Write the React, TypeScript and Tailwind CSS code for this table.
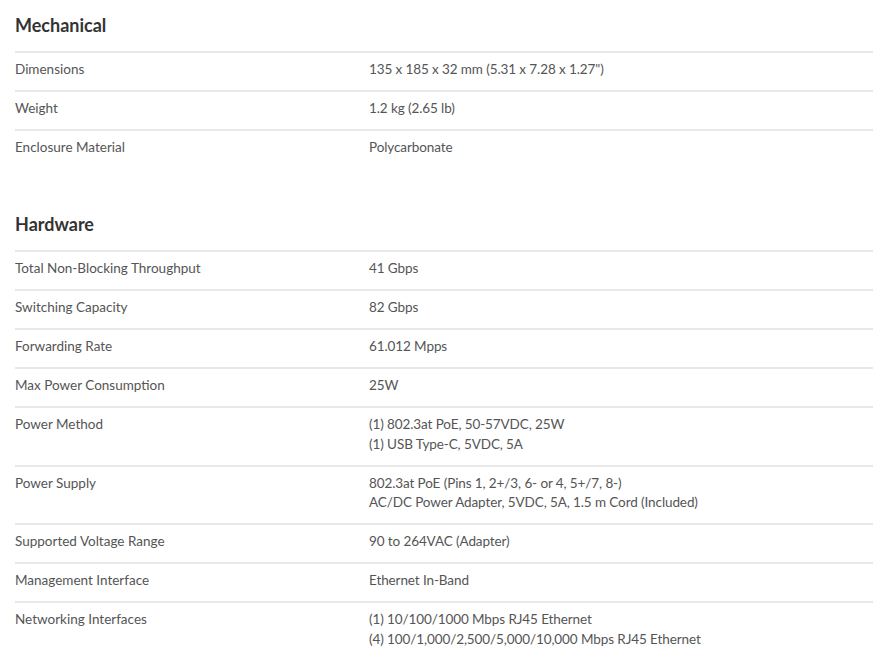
import React from "react";

type Row = { label: string; value: string[] };

const sections: { title: string; rows: Row[] }[] = [
  {
    title: "Mechanical",
    rows: [
      { label: "Dimensions", value: ['135 x 185 x 32 mm (5.31 x 7.28 x 1.27")'] },
      { label: "Weight", value: ["1.2 kg (2.65 lb)"] },
      { label: "Enclosure Material", value: ["Polycarbonate"] },
    ],
  },
  {
    title: "Hardware",
    rows: [
      { label: "Total Non-Blocking Throughput", value: ["41 Gbps"] },
      { label: "Switching Capacity", value: ["82 Gbps"] },
      { label: "Forwarding Rate", value: ["61.012 Mpps"] },
      { label: "Max Power Consumption", value: ["25W"] },
      {
        label: "Power Method",
        value: ["(1) 802.3at PoE, 50-57VDC, 25W", "(1) USB Type-C, 5VDC, 5A"],
      },
      {
        label: "Power Supply",
        value: [
          "802.3at PoE (Pins 1, 2+/3, 6- or 4, 5+/7, 8-)",
          "AC/DC Power Adapter, 5VDC, 5A, 1.5 m Cord (Included)",
        ],
      },
      { label: "Supported Voltage Range", value: ["90 to 264VAC (Adapter)"] },
      { label: "Management Interface", value: ["Ethernet In-Band"] },
      {
        label: "Networking Interfaces",
        value: [
          "(1) 10/100/1000 Mbps RJ45 Ethernet",
          "(4) 100/1,000/2,500/5,000/10,000 Mbps RJ45 Ethernet",
        ],
      },
    ],
  },
];

export default function App() {
  return (
    <div
      className="min-h-[658px] bg-white pl-[15px]"
      style={{ fontFamily: "Lato, 'Open Sans', sans-serif" }}
    >
      {sections.map((s, si) => (
        <div key={s.title} className={si > 0 ? "mt-[31px]" : ""}>
          <h2 className="pt-[13px] pb-[14px] text-[18px] leading-[24px] font-bold text-[#333]">
            {s.title}
          </h2>
          {s.rows.map((r) => (
            <div
              key={r.label}
              className="flex border-t-2 border-[#e8e8e8] pt-[7px] pb-[10.5px] text-[13.5px] leading-[19.5px] text-[#555]"
            >
              <div className="w-[354px] shrink-0">{r.label}</div>
              <div className="flex flex-col tracking-[-0.1px]">
                {r.value.map((v) => (
                  <span key={v}>{v}</span>
                ))}
              </div>
            </div>
          ))}
        </div>
      ))}
    </div>
  );
}
